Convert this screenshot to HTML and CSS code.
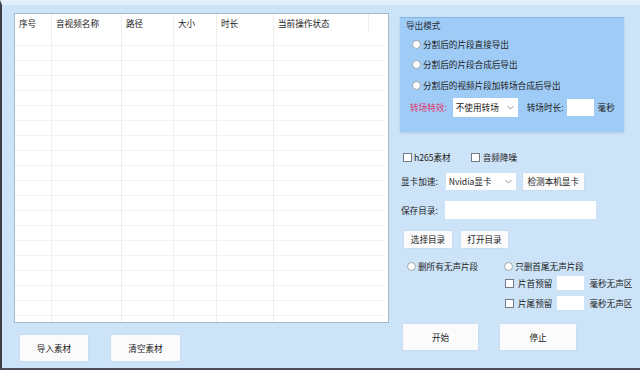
FILE: index.html
```html
<!DOCTYPE html>
<html lang="zh">
<head>
<meta charset="utf-8">
<link rel="stylesheet" href="styles.css">
</head>
<body>
<div class="window">
  <div class="left">
    <div class="table">
      <div class="thead">
        <div class="th c1">序号</div>
        <div class="th c2">音视频名称</div>
        <div class="th c3">路径</div>
        <div class="th c4">大小</div>
        <div class="th c5">时长</div>
        <div class="th c6">当前操作状态</div>
        <div class="th c7"></div>
      </div>
      <div class="tbody">
        <div class="tr"><div class="td c1"></div><div class="td c2"></div><div class="td c3"></div><div class="td c4"></div><div class="td c5"></div><div class="td c6"></div></div>
        <div class="tr"><div class="td c1"></div><div class="td c2"></div><div class="td c3"></div><div class="td c4"></div><div class="td c5"></div><div class="td c6"></div></div>
        <div class="tr"><div class="td c1"></div><div class="td c2"></div><div class="td c3"></div><div class="td c4"></div><div class="td c5"></div><div class="td c6"></div></div>
        <div class="tr"><div class="td c1"></div><div class="td c2"></div><div class="td c3"></div><div class="td c4"></div><div class="td c5"></div><div class="td c6"></div></div>
        <div class="tr"><div class="td c1"></div><div class="td c2"></div><div class="td c3"></div><div class="td c4"></div><div class="td c5"></div><div class="td c6"></div></div>
        <div class="tr"><div class="td c1"></div><div class="td c2"></div><div class="td c3"></div><div class="td c4"></div><div class="td c5"></div><div class="td c6"></div></div>
        <div class="tr"><div class="td c1"></div><div class="td c2"></div><div class="td c3"></div><div class="td c4"></div><div class="td c5"></div><div class="td c6"></div></div>
        <div class="tr"><div class="td c1"></div><div class="td c2"></div><div class="td c3"></div><div class="td c4"></div><div class="td c5"></div><div class="td c6"></div></div>
        <div class="tr"><div class="td c1"></div><div class="td c2"></div><div class="td c3"></div><div class="td c4"></div><div class="td c5"></div><div class="td c6"></div></div>
        <div class="tr"><div class="td c1"></div><div class="td c2"></div><div class="td c3"></div><div class="td c4"></div><div class="td c5"></div><div class="td c6"></div></div>
        <div class="tr"><div class="td c1"></div><div class="td c2"></div><div class="td c3"></div><div class="td c4"></div><div class="td c5"></div><div class="td c6"></div></div>
        <div class="tr"><div class="td c1"></div><div class="td c2"></div><div class="td c3"></div><div class="td c4"></div><div class="td c5"></div><div class="td c6"></div></div>
        <div class="tr"><div class="td c1"></div><div class="td c2"></div><div class="td c3"></div><div class="td c4"></div><div class="td c5"></div><div class="td c6"></div></div>
        <div class="tr"><div class="td c1"></div><div class="td c2"></div><div class="td c3"></div><div class="td c4"></div><div class="td c5"></div><div class="td c6"></div></div>
        <div class="tr"><div class="td c1"></div><div class="td c2"></div><div class="td c3"></div><div class="td c4"></div><div class="td c5"></div><div class="td c6"></div></div>
        <div class="tr"><div class="td c1"></div><div class="td c2"></div><div class="td c3"></div><div class="td c4"></div><div class="td c5"></div><div class="td c6"></div></div>
        <div class="tr"><div class="td c1"></div><div class="td c2"></div><div class="td c3"></div><div class="td c4"></div><div class="td c5"></div><div class="td c6"></div></div>
        <div class="tr"><div class="td c1"></div><div class="td c2"></div><div class="td c3"></div><div class="td c4"></div><div class="td c5"></div><div class="td c6"></div></div>
        <div class="tr"><div class="td c1"></div><div class="td c2"></div><div class="td c3"></div><div class="td c4"></div><div class="td c5"></div><div class="td c6"></div></div>
      </div>
    </div>
    <div class="left-buttons">
      <div class="btn btn-big b-import">导入素材</div>
      <div class="btn btn-big b-clear">清空素材</div>
    </div>
  </div>

  <div class="right">
    <div class="group">
      <div class="group-title">导出模式</div>
      <div class="g-row"><span class="radio"></span><span class="lbl">分割后的片段直接导出</span></div>
      <div class="g-row"><span class="radio"></span><span class="lbl">分割后的片段合成后导出</span></div>
      <div class="g-row"><span class="radio"></span><span class="lbl">分割后的视频片段加转场合成后导出</span></div>
      <div class="g-row trans">
        <span class="red">转场特效:</span>
        <div class="select sel-trans"><span>不使用转场</span><svg class="chev" width="7" height="5" viewBox="0 0 7 5"><path d="M0.5 1 L3.5 4 L6.5 1" fill="none" stroke="#888" stroke-width="0.9"/></svg></div>
        <span class="lbl t-dur">转场时长:</span>
        <div class="input in-dur"></div>
        <span class="lbl ms">毫秒</span>
      </div>
    </div>

    <div class="row r-checks">
      <span class="check"></span><span class="lbl">h265素材</span>
      <span class="check ck2"></span><span class="lbl">音频降噪</span>
    </div>
    <div class="row r-gpu">
      <span class="lbl">显卡加速:</span>
      <div class="select sel-gpu"><span>Nvidia显卡</span><svg class="chev" width="7" height="5" viewBox="0 0 7 5"><path d="M0.5 1 L3.5 4 L6.5 1" fill="none" stroke="#888" stroke-width="0.9"/></svg></div>
      <div class="btn btn-small b-detect">检测本机显卡</div>
    </div>
    <div class="row r-save">
      <span class="lbl">保存目录:</span>
      <div class="input in-save"></div>
    </div>
    <div class="row r-dirs">
      <div class="btn btn-small b-choose">选择目录</div>
      <div class="btn btn-small b-open">打开目录</div>
    </div>
    <div class="row r-radios">
      <span class="radio"></span><span class="lbl">删所有无声片段</span>
      <span class="radio rd2"></span><span class="lbl">只删首尾无声片段</span>
    </div>
    <div class="row r-pad">
      <span class="check"></span><span class="lbl pad-lbl">片首预留</span>
      <div class="input in-pad"></div>
      <span class="lbl">毫秒无声区</span>
    </div>
    <div class="row r-pad r-pad2">
      <span class="check"></span><span class="lbl pad-lbl">片尾预留</span>
      <div class="input in-pad"></div>
      <span class="lbl">毫秒无声区</span>
    </div>
    <div class="row r-run">
      <div class="btn btn-big b-start">开始</div>
      <div class="btn btn-big b-stop">停止</div>
    </div>
  </div>
</div>
</body>
</html>
```

FILE: styles.css
```css
html, body {
  margin: 0;
  padding: 0;
}
body {
  width: 640px;
  height: 370px;
  overflow: hidden;
  background: #cde3f8;
  font-family: "Noto Sans CJK SC", "Noto Sans", sans-serif;
  font-size: 8.6px;
  color: #222;
}
.window {
  box-sizing: border-box;
  width: 640px;
  height: 370px;
  display: flex;
  border-left: 2px solid #3c4046;
  border-bottom: 2px solid #4a4f55;
  border-top: 5px solid #e2eefb;
  background: #cde3f8;
}

/* ---------- left column ---------- */
.left {
  width: 398px;
  padding-left: 12px;
  padding-top: 8px;
  box-sizing: border-box;
}
.table {
  box-sizing: border-box;
  width: 375px;
  height: 310px;
  background: #fff;
  border: 1px solid #a6b8cb;
  overflow: hidden;
}
.thead {
  display: flex;
  height: 31px;
}
.th {
  box-sizing: border-box;
  height: 31px;
  padding: 3px 0 0 4px;
  line-height: 12px;
  border-right: 1px solid #ededed;
  color: #222;
  white-space: nowrap;
}
.th.c7 { border-right: none; }
.th.c6 { border-right: 1px solid #ececec; height: 18px; }
.c1 { width: 37px; }
.c2 { width: 70px; }
.c3 { width: 52px; }
.c4 { width: 43px; }
.c5 { width: 57px; }
.c6 { width: 95px; }
.c7 { width: 19px; }
.tbody .c6 { width: 110px; border-right: none; }
.tr {
  display: flex;
  height: 15px;
}
.td {
  box-sizing: border-box;
  height: 15px;
  border-right: 1px solid #efefef;
  border-top: 1px solid #f1f1f1;
}

.left-buttons {
  display: flex;
  margin-top: 12px;
  padding-left: 6px;
}
.btn {
  background: #fbfbfb;
  display: flex;
  align-items: center;
  justify-content: center;
  box-sizing: border-box;
  color: #222;
  white-space: nowrap;
  box-shadow: 0 0 1px rgba(120, 150, 180, 0.4);
}
.btn-big {
  height: 26px;
}
.b-import { width: 68px; }
.b-clear { width: 69px; margin-left: 23px; }

/* ---------- right column ---------- */
.right {
  display: flex;
  flex-direction: column;
  padding-top: 12px;
  width: 240px;
}
.group {
  box-sizing: border-box;
  width: 224px;
  height: 115px;
  background: #9fccf6;
  border-top: 1px solid #86b5e3;
  box-shadow: 0 1px 2px rgba(110, 150, 190, 0.35);
  padding-left: 6px;
}
.group-title {
  height: 15px;
  line-height: 12px;
  padding-top: 1px;
  color: #1f2a36;
}
.g-row {
  display: flex;
  align-items: center;
  height: 20px;
  padding-left: 6px;
}
.g-row:nth-child(4) { margin-top: 1px; }
.radio {
  display: inline-block;
  box-sizing: border-box;
  width: 9px;
  height: 9px;
  border-radius: 50%;
  background: #fff;
  border: 1px solid #9aa4ae;
  margin-right: 2px;
  flex: none;
}
.lbl { white-space: nowrap; }
.g-row.trans {
  padding-left: 4px;
  margin-top: 2px;
  height: 20px;
}
.red { color: #e0356c; white-space: nowrap; }
.select {
  display: flex;
  align-items: center;
  justify-content: space-between;
  box-sizing: border-box;
  background: #fff;
  padding: 0 4px 0 3px;
  color: #222;
  white-space: nowrap;
}
.sel-trans {
  width: 65px;
  height: 19px;
  margin-left: 6px;
}
.chev { flex: none; }
.t-dur { margin-left: 9px; }
.input {
  box-sizing: border-box;
  background: #fff;
}
.in-dur {
  width: 27px;
  height: 17px;
  margin-left: 3px;
}
.ms { margin-left: 4px; }

.row {
  display: flex;
  align-items: center;
}
.check {
  display: inline-block;
  box-sizing: border-box;
  width: 9px;
  height: 9px;
  background: #fff;
  border: 1px solid #6f7a85;
  margin-right: 2px;
  flex: none;
}
.r-checks {
  height: 20px;
  margin-top: 15px;
  padding-left: 3px;
}
.ck2 { margin-left: 20px; margin-right: 3px; }
.r-gpu {
  height: 18px;
  margin-top: 5px;
  padding-left: 1px;
}
.sel-gpu {
  width: 70px;
  height: 17px;
  margin-left: 8px;
}
.btn-small {
  height: 17px;
}
.b-detect { margin-left: 7px; width: 61px; }
.r-save {
  height: 18px;
  margin-top: 11px;
  padding-left: 1px;
}
.in-save {
  width: 151px;
  height: 18px;
  margin-left: 7px;
}
.r-dirs {
  height: 18px;
  margin-top: 11px;
  padding-left: 4px;
}
.b-choose { width: 48px; }
.b-open { width: 47px; margin-left: 9px; }
.r-radios {
  height: 14px;
  margin-top: 11px;
  padding-left: 7px;
}
.rd2 { margin-left: 26px; }
.r-pad {
  height: 14px;
  margin-top: 3px;
  padding-left: 105px;
}
.r-pad2 { margin-top: 6px; }
.pad-lbl { margin-left: 2px; }
.in-pad {
  width: 27px;
  height: 14px;
  margin-left: 5px;
  margin-right: 5px;
}
.r-run {
  margin-top: 14px;
  padding-left: 3px;
}
.b-start { width: 75px; }
.b-stop { width: 76px; margin-left: 22px; }
```
